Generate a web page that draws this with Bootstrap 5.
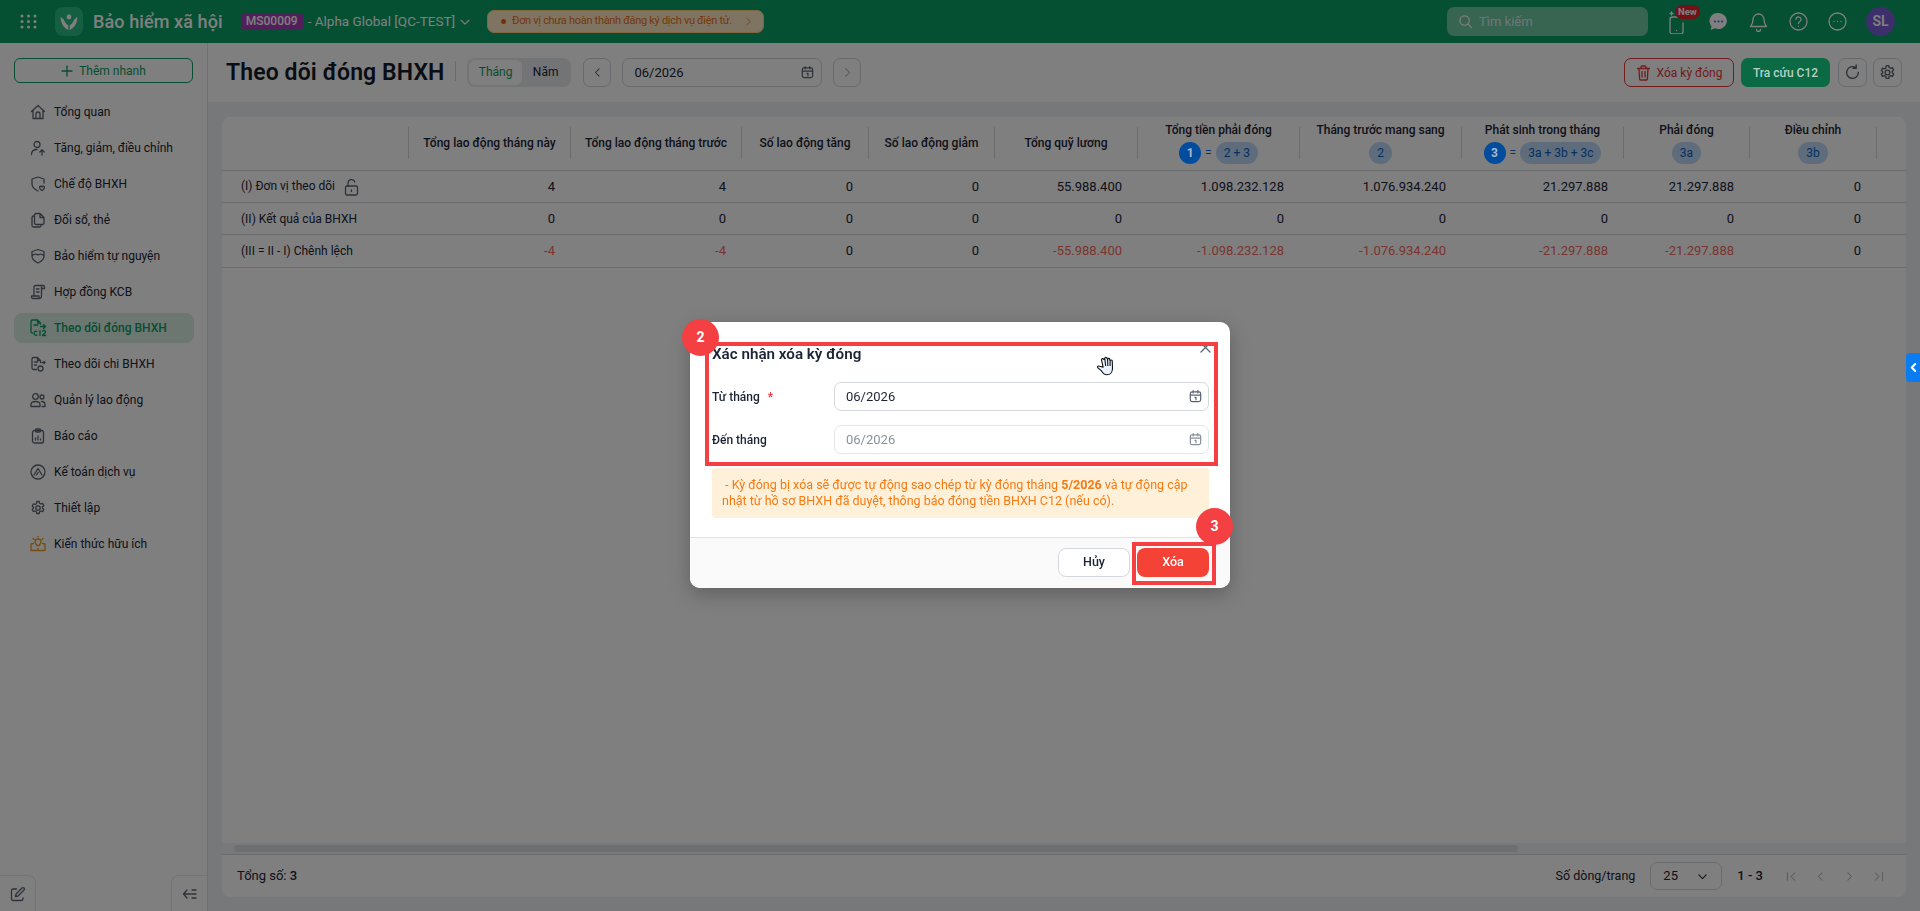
<!DOCTYPE html>
<html lang="vi">
<head>
  <meta charset="UTF-8" />
  <meta name="viewport" content="width=device-width, initial-scale=1.0"/>
  <title>Theo dõi đóng BHXH</title>

  <!-- Bootstrap 5 CSS -->
  <link href="https://cdn.jsdelivr.net/npm/bootstrap@5.3.2/dist/css/bootstrap.min.css" rel="stylesheet" />

  <style>
    html, body {
      height: 100%;
      margin: 0;
      overflow: hidden;
      font-family: "Roboto", "Liberation Sans", sans-serif;
      font-size: 12px;
      color: #1c2434;
    }

    .ic { fill: none; stroke: currentColor; stroke-width: 1.3; stroke-linecap: round; stroke-linejoin: round; flex-shrink: 0; }

    /* Top bar */
    .app-top { height: 43px; background: #0aa064; color: #fff; padding-left: 20px; padding-right: 25px; }
    .app-logo { width: 28px; height: 29px; border-radius: 8px; background: #2dbd83; margin-left: 18px; }
    .app-name { font-size: 18px; font-weight: 500; letter-spacing: .1px; margin-left: 10px; margin-right: 18px; white-space: nowrap; }
    .org-code { background: #a53fb8; border-radius: 4px; width: 62px; height: 17px; line-height: 17px; text-align: center; font-size: 12px; font-weight: 500; }
    .org-name { font-size: 13.5px; margin-left: 5px; white-space: nowrap; }
    .top-warn { width: 277px; height: 23px; margin-left: 15px; background: #ffe8c2; color: #e8701a; border: 1px solid #ffd184; border-radius: 7px; padding: 0 9px 0 13px; font-size: 11px; letter-spacing: -.3px; white-space: nowrap; }
    .warn-dot { width: 5px; height: 5px; border-radius: 50%; background: #e8601a; margin-right: 6px; flex-shrink: 0; }
    .top-search { width: 201px; height: 29px; background: rgba(255,255,255,.42); border-radius: 7px; padding-left: 11px; color: #fff; font-size: 13px; }
    .top-search span { opacity: .75; }
    .new-tag { position: absolute; top: -4px; left: 6px; background: #e8222a; color: #fff; font-size: 9.5px; font-weight: 700; line-height: 14px; padding: 0 3px; border-radius: 7px; }
    .top-ava { width: 29px; height: 29px; border-radius: 50%; background: #7a5fd8; font-size: 14px; font-weight: 600; }

    /* Sidebar */
    .app-side { width: 208px; border-right: 1px solid #dde0e4; background: #fff; padding-top: 15px; flex-shrink: 0; }
    .quick-add { width: 179px; height: 25px; margin: 0 0 14px 14px; border: 1px solid #0f9a63; border-radius: 6px; color: #0f9a63; font-size: 12px; padding: 0; background: #fff; }
    .side-item { height: 30px; width: 180px; margin: 0 0 6px 14px; padding-left: 16px; border-radius: 8px; gap: 8px; white-space: nowrap; color: #1c2434; text-decoration: none; }
    .side-item .ic { color: #5b6472; }
    .side-item.on { background: #d9efe5; color: #0f9a63; font-weight: 500; }
    .side-item.on .ic { color: #0f9a63; }
    .side-item .ic.gold { color: #ea9a1a; }
    .side-corner { width: 36px; height: 36px; border-top: 1px solid #e6e8eb; color: #5b6472; }
    .side-corner.lft { border-right: 1px solid #e6e8eb; border-top-right-radius: 8px; }
    .side-corner.rgt { border-left: 1px solid #e6e8eb; border-top-left-radius: 8px; }

    /* Page head */
    .page-head { height: 59px; padding: 15px 18px 0; background: #fff; }
    .page-title { font-size: 23px; font-weight: 600; letter-spacing: .1px; margin: 0; line-height: 29px; white-space: nowrap; color: #131a2b; }
    .head-sep { width: 1px; height: 20px; background: #d3d6da; margin: 0 11px; }
    .seg-wrap { width: 104px; height: 29px; background: #e6e8eb; border-radius: 8px; padding: 2px; }
    .seg-item { height: 25px; border-radius: 6px; padding: 0 11px; line-height: 25px; font-size: 12px; }
    .seg-item.on { background: #fff; color: #0f9a63; width: 55px; padding: 0; text-align: center; }
    .sq-btn { width: 28px; height: 29px; border: 1px solid #cfd3d8; border-radius: 7px; background: #fff; padding: 0; color: #5b6472; }
    .sq-btn.dis { color: #a5abb3; }
    .sq-btn.wide { width: 29px; }
    .prev-btn { margin-left: 12px; }
    .date-box { width: 200px; height: 29px; margin: 0 11px; border: 1px solid #cfd3d8; border-radius: 7px; padding: 0 6px 0 11px; background: #fff; font-size: 13px; }
    .date-box .ic { color: #5b6472; }
    .btn-del { height: 29px; width: 110px; border: 1px solid #e8343a; color: #e8343a; background: #fff; border-radius: 7px; padding: 0; font-size: 12px; }
    .btn-c12 { height: 29px; width: 89px; margin: 0 8px 0 7px; padding: 0; background: #0a6a44; border: 0; border-radius: 7px; color: #b9cfc6; font-size: 12px; font-weight: 500; position: relative; z-index: 1051; }

    /* Table card */
    .page-body { background: #edf0f3; padding: 15px 14px 14px; min-height: 0; }
    .data-card { background: #fff; border-radius: 8px; height: 100%; overflow: hidden; }
    .data-wrap { overflow: hidden; min-height: 0; }
    .data-tbl { table-layout: fixed; width: 1684px; margin: 0; font-size: 13px; }
    .data-tbl th { height: 53px; padding: 0; font-size: 12px; font-weight: 500; text-align: center; vertical-align: middle; border-bottom: 1px solid #d5d8dc; color: #1c2434; }
    .th-in { height: 32px; display: flex; flex-direction: column; align-items: center; justify-content: center; border-right: 1px solid #d5d8dc; white-space: nowrap; }
    .data-tbl td { height: 32px; padding: 1px 16px 0 0; text-align: right; vertical-align: middle; border-bottom: 1px solid #d5d8dc; color: #1c2434; white-space: nowrap; }
    .data-tbl tr:last-child td { height: 33px; }
    .data-tbl td:first-child { text-align: left; padding-left: 19px; font-size: 12px; }
    .data-tbl td.neg { color: #f46a5e; }
    .lock-ic { color: #5b6472; margin-left: 6px; }
    .th-two { justify-content: flex-start; }
    .th-lab { margin-top: -5px; line-height: 16px; }
    .chip-row { height: 22px; margin-top: 4px; gap: 4px; font-size: 12px; font-weight: 400; }
    .chip-no { width: 22px; height: 22px; line-height: 22px; border-radius: 50%; background: #024c9e; color: #a8b8cc; font-weight: 700; text-align: center; position: relative; z-index: 1051; }
    .chip-eq { color: #0a6fd8; }
    .chip-val { height: 22px; line-height: 22px; min-width: 22px; padding: 0 8px; border-radius: 11px; background: #bcd9f7; color: #0a5fc4; text-align: center; }
    .fake-scroll { height: 11px; background: #f1f2f4; padding: 2px 12px; }
    .fake-thumb { height: 7px; background: #dcdee1; border-radius: 4px; }
    .data-foot { height: 43px; border-top: 1px solid #d5d8dc; padding: 0 21px 0 15px; font-size: 13px; }
    .pg-lab { font-size: 12.5px; }
    .pg-select { width: 72px; height: 28px; border: 1px solid #d5d8dc; border-radius: 7px; padding: 0 12px; margin: 0 15px; }
    .pg-nav { color: #b6bbc2; margin-left: 16px; }

    /* Modal */
    .dlg-wrap { max-width: 540px; }
    .dlg-box { border: 0; border-radius: 10px; height: 266px; margin-top: -1px; box-shadow: 0 6px 20px rgba(0,0,0,.25); }
    .dlg-top { padding: 22px 21px 0 22px; }
    .dlg-title { font-size: 15.2px; font-weight: 600; line-height: 20px; margin-bottom: 18px; color: #1c2434; }
    .dlg-x { position: absolute; right: 19px; top: 20px; color: #5b6472; }
    .form-line { height: 29px; margin-bottom: 14px; }
    .form-lab { width: 122px; font-weight: 500; }
    .form-lab i { color: #f0343a; font-style: normal; margin-left: 5px; }
    .date-in { flex: 1; height: 29px; border: 1px solid #d5d8dc; border-radius: 7px; padding: 0 5px 0 11px; font-size: 13px; }
    .date-in .ic { color: #5b6472; }
    .date-in.dis { color: #8a919b; border-color: #e3e5e8; }
    .date-in.dis .ic { color: #8a919b; }
    .dlg-note { height: 50px; background: #fff0d9; color: #f57a14; border-radius: 3px; padding: 9px 10px; font-size: 12.5px; line-height: 16px; }
    .dlg-foot { height: 51px; margin-top: 19px; background: #fafafa; border-top: 1px solid #e0e2e5; padding: 10px 21px 0 0; gap: 7px; border-radius: 0 0 10px 10px; }
    .btn-no { width: 72px; height: 29px; padding: 0; background: #fff; border: 1px solid #d5d8dc; border-radius: 8px; font-size: 12.5px; font-weight: 500; color: #1c2434; }
    .btn-yes { width: 72px; height: 29px; padding: 0; background: #f44336; border: 0; border-radius: 8px; font-size: 12.5px; font-weight: 500; color: #fff; }

    /* Tutorial marks over the dialog */
    .mark-box { position: absolute; border: 4px solid #f44043; pointer-events: none; }
    .mark-a { left: 15px; top: 20px; width: 513px; height: 124px; }
    .mark-b { left: 442px; top: 220px; width: 84px; height: 43px; }
    .mark-no { position: absolute; width: 37px; height: 37px; border-radius: 50%; background: #f44043; color: #fff; font-weight: 700; font-size: 14px; display: flex; align-items: center; justify-content: center; }
    .mark-1 { left: -8px; top: -3px; }
    .mark-2 { left: 506px; top: 186px; }
    .hand-cur { position: absolute; left: 406px; top: 33px; }
    .side-tab { position: fixed; right: 0; top: 353px; width: 14px; height: 29px; background: #0a7cf0; border-radius: 4px 0 0 4px; color: #fff; z-index: 1060; }
  </style>
</head>
<body>

<svg width="0" height="0" class="position-absolute">
  <symbol id="i-cal" viewBox="0 0 16 16"><rect x="2.5" y="3" width="11" height="10.5" rx="2"/><path d="M2.5 6.5h11M5.5 1.8v2.4M10.5 1.8v2.4M7.5 9h1v2.5"/></symbol>
  <symbol id="i-left" viewBox="0 0 16 16"><path d="M10 3.5 5.5 8l4.500 4.500"/></symbol>
  <symbol id="i-right" viewBox="0 0 16 16"><path d="M6 3.500 10.500 8 6 12.500"/></symbol>
  <symbol id="i-down" viewBox="0 0 16 16"><path d="M3.500 6 8 10.500 12.500 6"/></symbol>
  <symbol id="i-gear" viewBox="0 0 16 16"><circle cx="8" cy="8" r="2.200"/><path d="M6.800 1.500h2.400l.4 1.800 1.300.7 1.700-.6 1.200 2.100-1.300 1.300v1.400l1.300 1.300-1.200 2.100-1.700-.6-1.300.7-.4 1.800H6.800l-.4-1.800-1.300-.7-1.700.6-1.200-2.100 1.300-1.300V7.300L2.200 6l1.200-2.100 1.700.6 1.300-.7z"/></symbol>
</svg>

<div class="d-flex flex-column vh-100">
  <!-- Top bar -->
  <header class="app-top d-flex align-items-center flex-shrink-0">
    <svg width="17" height="15" viewBox="0 0 17 15" fill="#fff"><circle cx="2" cy="2" r="1.500"/><circle cx="8.500" cy="2" r="1.500"/><circle cx="15" cy="2" r="1.500"/><circle cx="2" cy="7.500" r="1.500"/><circle cx="8.500" cy="7.500" r="1.500"/><circle cx="15" cy="7.500" r="1.500"/><circle cx="2" cy="13" r="1.500"/><circle cx="8.500" cy="13" r="1.500"/><circle cx="15" cy="13" r="1.500"/></svg>
    <div class="app-logo d-flex align-items-center justify-content-center">
      <svg width="20" height="20" viewBox="0 0 20 20" fill="#fff"><circle cx="10" cy="5" r="2.400"/><path d="M1.500 5c2.500 1 3.500 3 4.500 5 1 2 2.500 2.500 3.300 3.500V18C6 16.500 2 13 1.500 5zM18.500 5c-2.500 1-3.500 3-4.500 5-1 2-2.500 2.500-3.300 3.500V18c3.300-1.500 7.300-5 7.800-13z"/></svg>
    </div>
    <div class="app-name">Bảo hiểm xã hội</div>
    <div class="org-code">MS00009</div>
    <div class="org-name">- Alpha Global [QC-TEST]</div>
    <svg class="ic ms-1" width="14" height="14"><use href="#i-down"/></svg>
    <div class="top-warn d-flex align-items-center">
      <span class="warn-dot"></span>Đơn vị chưa hoàn thành đăng ký dịch vụ điện tử.
      <svg class="ic ms-auto" width="11" height="11" viewBox="0 0 16 16"><path d="M6 3.500 10.500 8 6 12.500"/></svg>
    </div>
    <div class="top-search d-flex align-items-center gap-2 ms-auto">
      <svg class="ic" width="15" height="15" viewBox="0 0 16 16"><circle cx="7" cy="7" r="5"/><path d="m11 11 3.500 3.500"/></svg><span>Tìm kiếm</span>
    </div>
    <div class="position-relative d-flex" style="margin-left:21px">
      <svg class="ic" width="15" height="25" viewBox="0 0 15 25"><path d="M10 8H3.500A2.500 2.500 0 0 0 1 10.500v12A2.500 2.500 0 0 0 3.500 25h8a2.500 2.500 0 0 0 2.500-2.500V14M7.500 21.500h.01M2.500 3v3M1 4.500h3"/></svg>
      <span class="new-tag">New</span>
    </div>
    <svg style="margin-left:25px" width="19" height="19" viewBox="0 0 19 19"><path fill="#fff" d="M9.500 1a8.500 8 0 1 1-3.600 15.300L1.500 18l1-3.800A8 8 0 0 1 9.500 1z"/><circle cx="6" cy="9.500" r="1" fill="#3a5be0"/><circle cx="9.500" cy="9.500" r="1" fill="#3a5be0"/><circle cx="13" cy="9.500" r="1" fill="#3a5be0"/></svg>
    <svg class="ic" style="margin-left:21px" width="19" height="20" viewBox="0 0 19 20"><path d="M9.500 2a5.500 5.500 0 0 0-5.500 5.500c0 4-1.500 5.500-2.500 7h16c-1-1.500-2.500-3-2.500-7A5.500 5.500 0 0 0 9.500 2zM7.500 17.500a2 2 0 0 0 4 0"/></svg>
    <svg class="ic" style="margin-left:21px" width="19" height="19" viewBox="0 0 19 19"><circle cx="9.500" cy="9.500" r="8.500"/><path d="M7 7.300a2.500 2.500 0 1 1 3.800 2.200c-.9.500-1.300 1-1.300 2M9.500 14.300h.01"/></svg>
    <svg class="ic" style="margin-left:20px" width="19" height="19" viewBox="0 0 19 19"><circle cx="9.500" cy="9.500" r="8.500"/><path d="M6 9.500h.01M9.500 9.500h.01M13 9.500h.01"/></svg>
    <div class="top-ava d-flex align-items-center justify-content-center" style="margin-left:19px">SL</div>
  </header>

  <div class="d-flex flex-grow-1" style="min-height:0">
    <!-- Sidebar -->
    <aside class="app-side d-flex flex-column">
      <button class="btn quick-add d-flex align-items-center justify-content-center gap-2">
        <svg class="ic" width="12" height="12" viewBox="0 0 12 12"><path d="M6 1v10M1 6h10"/></svg>Thêm nhanh
      </button>
      <a class="side-item d-flex align-items-center"><svg class="ic" width="16" height="16" viewBox="0 0 16 16"><path d="M1.500 7.500 8 1.500l6.500 6M3 6.500V14.500h10V6.500M6 14.500V10a2 2 0 0 1 4 0v4.500"/></svg>Tổng quan</a>
      <a class="side-item d-flex align-items-center"><svg class="ic" width="16" height="16" viewBox="0 0 16 16"><circle cx="7" cy="4.500" r="3"/><path d="M1.500 14.500c0-3 2-5 5.500-5M12 15v-5M9.800 12 12 9.800l2.200 2.200"/></svg>Tăng, giảm, điều chỉnh</a>
      <a class="side-item d-flex align-items-center"><svg class="ic" width="16" height="16" viewBox="0 0 16 16"><path d="M14 7V3L8 1 2 3v5c0 3.500 2.500 5.500 6 7M9.500 11.500c0-1.500 2-1.700 2.500-.5.500-1.200 2.500-1 2.500.5 0 1.300-1.500 2.300-2.500 3-1-.7-2.500-1.700-2.500-3z"/></svg>Chế độ BHXH</a>
      <a class="side-item d-flex align-items-center"><svg class="ic" width="16" height="16" viewBox="0 0 16 16"><path d="M6 1.500h4l4 4V11a1.500 1.500 0 0 1-1.500 1.500H6A1.500 1.500 0 0 1 4.500 11V3A1.500 1.500 0 0 1 6 1.500zM10 1.500v4h4M4.500 4H3.500A1.500 1.500 0 0 0 2 5.500v8A1.500 1.500 0 0 0 3.500 15h6a1.500 1.500 0 0 0 1.500-1.500v-1"/></svg>Đối sổ, thẻ</a>
      <a class="side-item d-flex align-items-center"><svg class="ic" width="16" height="16" viewBox="0 0 16 16"><path d="M2 3.500 8 1.500l6 2V8c0 3.500-2.500 5.500-6 7-3.500-1.500-6-3.500-6-7zM2.300 7.500C4 6 6 5.500 8 7c2-1.500 4-1 5.700.5"/></svg>Bảo hiểm tự nguyện</a>
      <a class="side-item d-flex align-items-center"><svg class="ic" width="16" height="16" viewBox="0 0 16 16"><path d="M4 12V3a1.500 1.500 0 0 1 1.500-1.500H13A1.500 1.500 0 0 1 14.500 3v1.500H11.500M11.500 3v9a2.500 2.500 0 0 1-2.500 2.500H3A1.500 1.500 0 0 1 1.500 13v-1H9v1M6.500 5h2.500M6.500 8h2.500"/></svg>Hợp đồng KCB</a>
      <a class="side-item on d-flex align-items-center"><svg class="ic" width="18" height="18" viewBox="0 0 18 18" style="margin-left:-1px;margin-right:-1px"><path d="M8.500 1H3.500A1.500 1.500 0 0 0 2 2.500v10A1.500 1.500 0 0 0 3.500 14M8.500 1l3 3v1M8.500 1v3h3M5 6h4M11.500 7.500h5M14.500 5.500l2 2-2 2"/><path d="M8 12.500a2 2 0 1 0 0 3.500M11 11.500v5M13.500 12c1.500-1 3-.3 3 1 0 1.500-3 2-3 3.500h3.200"/></svg>Theo dõi đóng BHXH</a>
      <a class="side-item d-flex align-items-center"><svg class="ic" width="16" height="16" viewBox="0 0 16 16"><path d="M7.500 1.500H3.500A1.500 1.500 0 0 0 2 3v9a1.500 1.500 0 0 0 1.500 1.500h3M7.500 1.500l3 3v2M7.500 1.500v3h3M4.500 6h3M4.500 9h2M12 6.500h3M14 5.500l1 1-1 1"/><circle cx="10.500" cy="12.500" r="2.500"/></svg>Theo dõi chi BHXH</a>
      <a class="side-item d-flex align-items-center"><svg class="ic" width="16" height="16" viewBox="0 0 16 16"><circle cx="5.500" cy="4.500" r="2.800"/><circle cx="12" cy="5" r="2"/><path d="M1 14.500v-2c0-1.500 1.500-3 4.500-3s4.500 1.500 4.500 3v2zM11.500 9.500c2 0 3.500 1 3.500 3v2h-3"/></svg>Quản lý lao động</a>
      <a class="side-item d-flex align-items-center"><svg class="ic" width="16" height="16" viewBox="0 0 16 16"><rect x="2.500" y="2.500" width="11" height="12.500" rx="2"/><rect x="5.500" y="1" width="5" height="3" rx="1"/><path d="M5.500 12v-2M8 12V8M10.500 12v-1"/></svg>Báo cáo</a>
      <a class="side-item d-flex align-items-center"><svg class="ic" width="16" height="16" viewBox="0 0 16 16"><circle cx="8" cy="8" r="7"/><path d="M4 11 8 4.500 12 11M6.500 11l1.700-2.500"/></svg>Kế toán dịch vụ</a>
      <a class="side-item d-flex align-items-center"><svg class="ic" width="16" height="16"><use href="#i-gear"/></svg>Thiết lập</a>
      <a class="side-item d-flex align-items-center"><svg class="ic gold" width="16" height="16" viewBox="0 0 16 16"><path d="M1 8v6.500h14V8l-2.500-.5M1 8l2.500-.5M8 14.500v-2M5 6a3 3 0 1 1 6 0c0 1.500-1.500 2-1.500 3.500h-3C6.500 8 5 7.500 5 6zM8 1V.5M3 2.500l1 1M13 2.500l-1 1"/></svg>Kiến thức hữu ích</a>
      <div class="d-flex justify-content-between mt-auto">
        <div class="side-corner lft d-flex align-items-center justify-content-center">
          <svg class="ic" width="16" height="16" viewBox="0 0 16 16"><path d="M6.500 3H3a1.500 1.500 0 0 0-1.500 1.500V13A1.500 1.500 0 0 0 3 14.500h8.500A1.500 1.500 0 0 0 13 13v-1M5.500 10.500l.5-2.500 6-6a1.400 1.400 0 0 1 2 2l-6 6z"/></svg>
        </div>
        <div class="side-corner rgt d-flex align-items-center justify-content-center">
          <svg class="ic" width="15" height="12" viewBox="0 0 15 12"><path d="M5 2 1.500 6 5 10M1.500 6H9M10 2h4M10 6h4M10 10h4"/></svg>
        </div>
      </div>
    </aside>

    <!-- Main -->
    <main class="d-flex flex-column flex-grow-1" style="min-width:0">
      <div class="page-head d-flex align-items-start flex-shrink-0">
        <h1 class="page-title">Theo dõi đóng BHXH</h1>
        <span class="head-sep mt-1"></span>
        <div class="seg-wrap d-flex">
          <div class="seg-item on">Tháng</div>
          <div class="seg-item">Năm</div>
        </div>
        <button class="sq-btn prev-btn d-flex align-items-center justify-content-center"><svg class="ic" width="13" height="13"><use href="#i-left"/></svg></button>
        <div class="date-box d-flex align-items-center justify-content-between">06/2026<svg class="ic" width="15" height="15"><use href="#i-cal"/></svg></div>
        <button class="sq-btn dis d-flex align-items-center justify-content-center"><svg class="ic" width="13" height="13"><use href="#i-right"/></svg></button>
        <button class="btn btn-del ms-auto d-flex align-items-center justify-content-center gap-2">
          <svg class="ic" width="15" height="16" viewBox="0 0 15 16"><path d="M1.500 3.500h12M5 3.500V2a1 1 0 0 1 1-1h3a1 1 0 0 1 1 1v1.500M3 3.500l.6 10.500a1 1 0 0 0 1 1h5.800a1 1 0 0 0 1-1L12 3.500M6 6.500v5.500M9 6.500v5.500"/></svg>Xóa kỳ đóng
        </button>
        <button class="btn btn-c12">Tra cứu C12</button>
        <button class="sq-btn wide d-flex align-items-center justify-content-center"><svg class="ic" width="17" height="17" viewBox="0 0 16 16"><path d="M13.500 8A5.500 5.500 0 1 1 11 3.400M11.500 1v3h-3"/></svg></button>
        <button class="sq-btn wide d-flex align-items-center justify-content-center ms-2"><svg class="ic" width="17" height="17"><use href="#i-gear"/></svg></button>
      </div>

      <div class="page-body flex-grow-1">
        <div class="data-card d-flex flex-column">
          <div class="data-wrap flex-grow-1">
            <table class="table data-tbl">
              <colgroup>
                <col style="width:187px"><col style="width:162px"><col style="width:171px"><col style="width:127px"><col style="width:126px"><col style="width:143px"><col style="width:162px"><col style="width:162px"><col style="width:162px"><col style="width:126px"><col style="width:127px"><col>
              </colgroup>
              <thead>
                <tr>
                  <th><div class="th-in"></div></th>
                  <th><div class="th-in">Tổng lao động tháng này</div></th>
                  <th><div class="th-in">Tổng lao động tháng trước</div></th>
                  <th><div class="th-in">Số lao động tăng</div></th>
                  <th><div class="th-in">Số lao động giảm</div></th>
                  <th><div class="th-in">Tổng quỹ lương</div></th>
                  <th><div class="th-in th-two"><div class="th-lab">Tổng tiền phải đóng</div><div class="chip-row d-flex align-items-center"><span class="chip-no">1</span><span class="chip-eq">=</span><span class="chip-val">2 + 3</span></div></div></th>
                  <th><div class="th-in th-two"><div class="th-lab">Tháng trước mang sang</div><div class="chip-row d-flex align-items-center"><span class="chip-val">2</span></div></div></th>
                  <th><div class="th-in th-two"><div class="th-lab">Phát sinh trong tháng</div><div class="chip-row d-flex align-items-center"><span class="chip-no">3</span><span class="chip-eq">=</span><span class="chip-val">3a + 3b + 3c</span></div></div></th>
                  <th><div class="th-in th-two"><div class="th-lab">Phải đóng</div><div class="chip-row d-flex align-items-center"><span class="chip-val">3a</span></div></div></th>
                  <th><div class="th-in th-two"><div class="th-lab">Điều chỉnh</div><div class="chip-row d-flex align-items-center"><span class="chip-val">3b</span></div></div></th>
                  <th></th>
                </tr>
              </thead>
              <tbody>
                <tr>
                  <td>(I) Đơn vị theo dõi <svg class="ic lock-ic" width="15" height="17" viewBox="0 0 15 17"><rect x="1.500" y="7" width="12" height="9" rx="1.500"/><path d="M4 7V4a3.500 3.500 0 0 1 6.800-1M7.500 11v1.500"/></svg></td>
                  <td>4</td><td>4</td><td>0</td><td>0</td><td>55.988.400</td><td>1.098.232.128</td><td>1.076.934.240</td><td>21.297.888</td><td>21.297.888</td><td>0</td><td></td>
                </tr>
                <tr>
                  <td>(II) Kết quả của BHXH</td>
                  <td>0</td><td>0</td><td>0</td><td>0</td><td>0</td><td>0</td><td>0</td><td>0</td><td>0</td><td>0</td><td></td>
                </tr>
                <tr>
                  <td>(III = II - I) Chênh lệch</td>
                  <td class="neg">-4</td><td class="neg">-4</td><td>0</td><td>0</td><td class="neg">-55.988.400</td><td class="neg">-1.098.232.128</td><td class="neg">-1.076.934.240</td><td class="neg">-21.297.888</td><td class="neg">-21.297.888</td><td>0</td><td></td>
                </tr>
              </tbody>
            </table>
          </div>
          <div class="fake-scroll flex-shrink-0"><div class="fake-thumb" style="width:1284px"></div></div>
          <div class="data-foot d-flex align-items-center flex-shrink-0">
            <div>Tổng số: <span class="fw-medium">3</span></div>
            <div class="pg-lab ms-auto">Số dòng/trang</div>
            <div class="pg-select d-flex align-items-center justify-content-between">25<svg class="ic" width="13" height="13"><use href="#i-down"/></svg></div>
            <div class="fw-medium">1 - 3</div>
            <svg class="ic pg-nav" style="margin-left:22px" width="13" height="13" viewBox="0 0 16 16"><path d="M3 3v10M12 3.500 7.500 8l4.500 4.500"/></svg>
            <svg class="ic pg-nav" width="13" height="13"><use href="#i-left"/></svg>
            <svg class="ic pg-nav" width="13" height="13"><use href="#i-right"/></svg>
            <svg class="ic pg-nav" width="13" height="13" viewBox="0 0 16 16"><path d="M13 3v10M4 3.500 8.500 8 4 12.500"/></svg>
          </div>
        </div>
      </div>
    </main>
  </div>
</div>

<div class="side-tab d-flex align-items-center justify-content-center">
  <svg class="ic" width="11" height="11" viewBox="0 0 16 16"><path d="M10.500 3 5.500 8l5 5" stroke-width="3"/></svg>
</div>

<!-- Confirm dialog -->
<div class="modal-backdrop show"></div>
<div class="modal d-block" tabindex="-1">
  <div class="modal-dialog modal-dialog-centered dlg-wrap">
    <div class="modal-content dlg-box">
      <div class="dlg-top">
        <div class="dlg-title">Xác nhận xóa kỳ đóng</div>
        <svg class="ic dlg-x" width="11" height="11" viewBox="0 0 11 11"><path d="m1 1 9 9M10 1l-9 9"/></svg>
        <div class="form-line d-flex align-items-center">
          <div class="form-lab">Từ tháng <i>*</i></div>
          <div class="date-in d-flex align-items-center justify-content-between">06/2026<svg class="ic" width="15" height="15"><use href="#i-cal"/></svg></div>
        </div>
        <div class="form-line d-flex align-items-center">
          <div class="form-lab">Đến tháng</div>
          <div class="date-in dis d-flex align-items-center justify-content-between">06/2026<svg class="ic" width="15" height="15"><use href="#i-cal"/></svg></div>
        </div>
        <div class="dlg-note">&nbsp;- Kỳ đóng bị xóa sẽ được tự động sao chép từ kỳ đóng tháng <b>5/2026</b> và tự động cập nhật từ hồ sơ BHXH đã duyệt, thông báo đóng tiền BHXH C12 (nếu có).</div>
      </div>
      <div class="dlg-foot d-flex justify-content-end">
        <button class="btn btn-no">Hủy</button>
        <button class="btn btn-yes">Xóa</button>
      </div>

      <div class="mark-box mark-a"></div>
      <div class="mark-box mark-b"></div>
      <div class="mark-no mark-1">2</div>
      <div class="mark-no mark-2">3</div>
      <svg class="hand-cur" width="22" height="22" viewBox="0 0 20 20"><path fill="#eaf3ff" stroke="#111" stroke-width="1" stroke-linejoin="round" d="M6.500 11 5 4.500a1 1 0 0 1 2-.4L8 3a1 1 0 0 1 2 0l.5 1a1 1 0 0 1 2 .2l.3 1.300a1 1 0 0 1 2 .2L15 12c0 3.500-2 6-5 6-2.500 0-3.500-1-5-3.500L1.500 11.500c-.6-1 .7-2 1.700-1.200zM8 3.500 8.800 10M10.500 4l.3 6M12.800 5.500V10"/></svg>
    </div>
  </div>
</div>

<!-- Bootstrap 5 JS -->
<script src="https://cdn.jsdelivr.net/npm/bootstrap@5.3.2/dist/js/bootstrap.bundle.min.js"></script>
</body>
</html>
